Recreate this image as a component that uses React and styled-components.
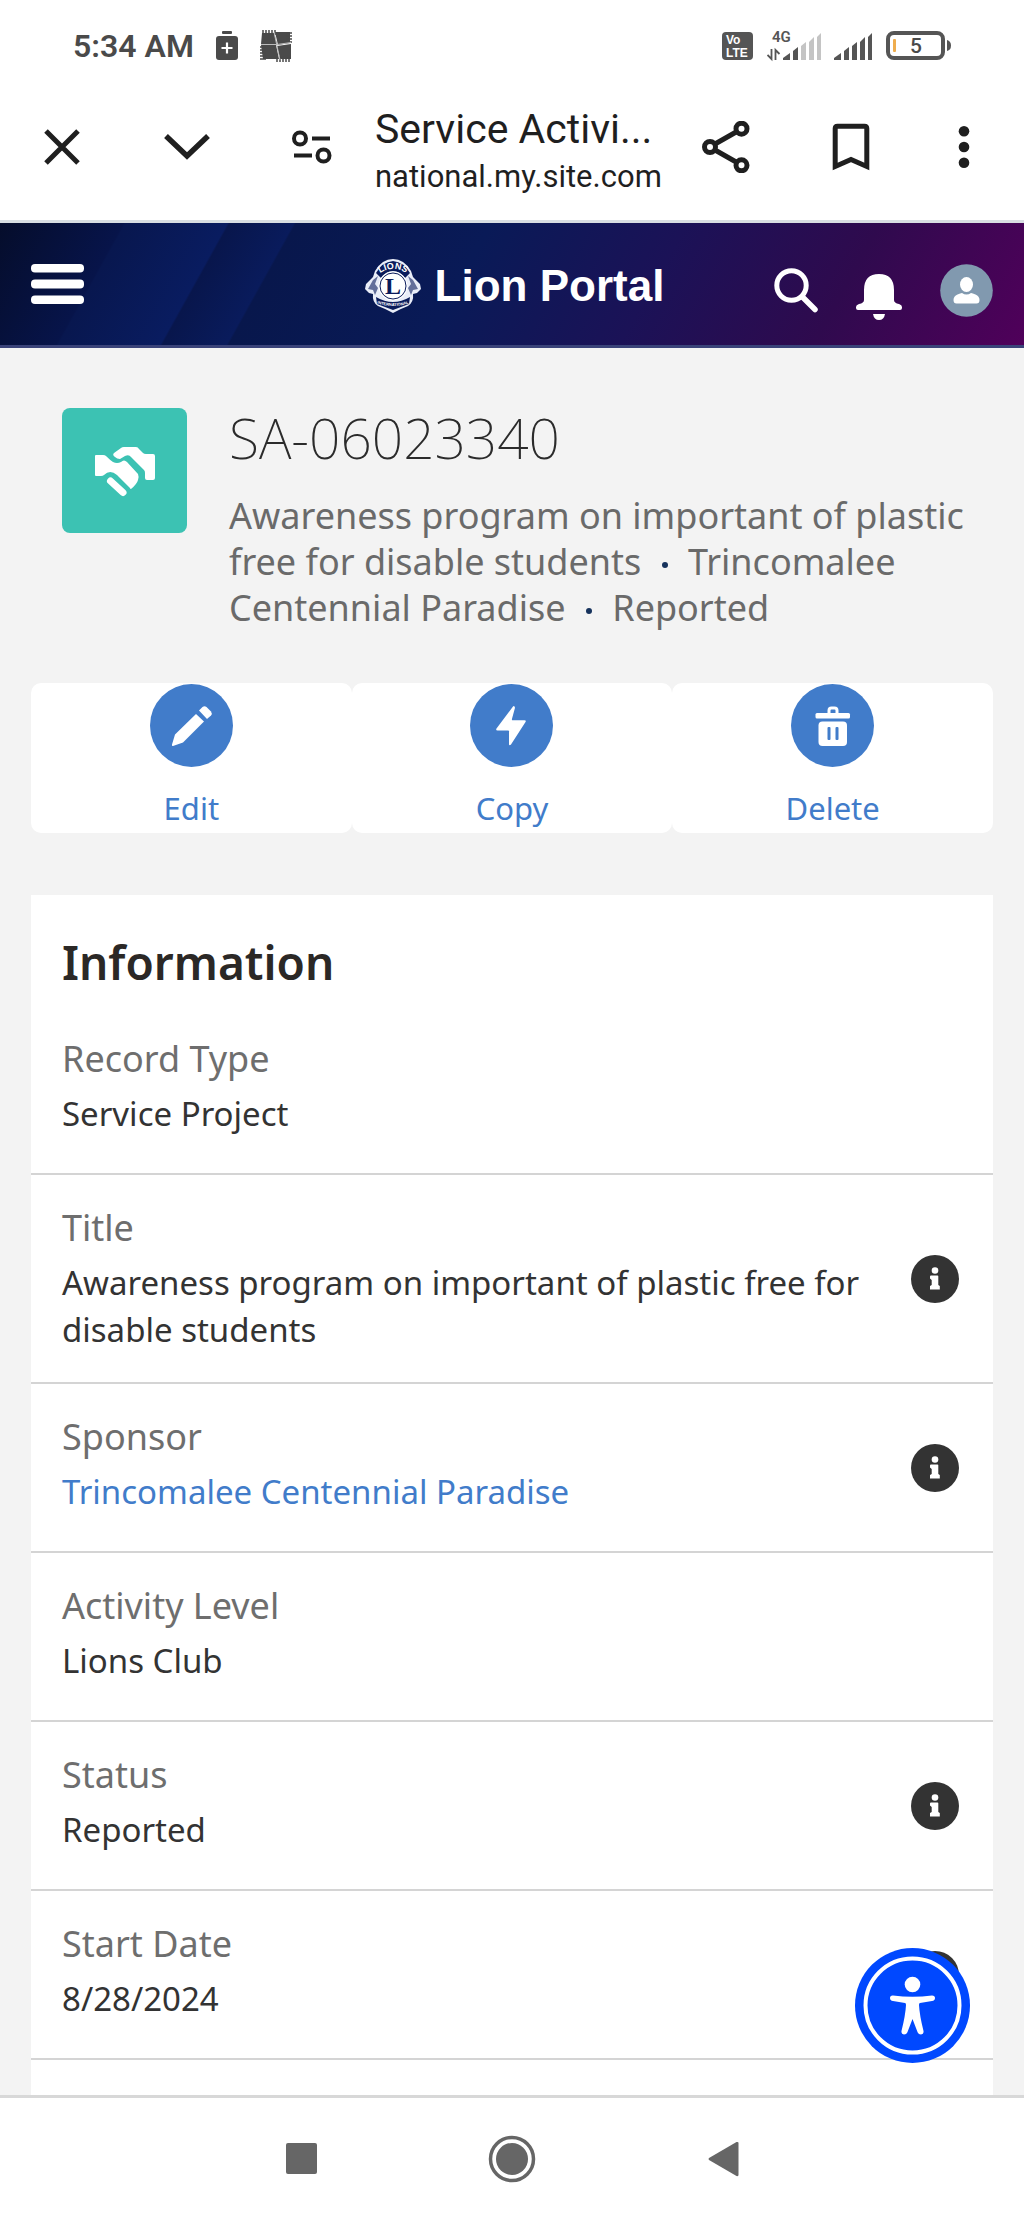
import React from 'react';
import styled, { createGlobalStyle, css } from 'styled-components'

const sans = '"Noto Sans", "Open Sans", sans-serif';

const GlobalStyle = createGlobalStyle`
  * {
    box-sizing: border-box;
  }
  body {
    margin: 0;
    background: #ffffff;
    font-family: ${sans};
  }
  svg {
    display: block;
    flex: none;
  }
`
const Screen = styled.div`
  min-height: 100vh;
  display: flex;
  flex-direction: column;
`
const resetButton = css`
  border: 0;
  padding: 0;
  background: none;
  font: inherit;
  color: inherit;
  cursor: pointer;
`

/* Status bar */
const StatusBar = styled.div`
  display: flex;
  justify-content: space-between;
  align-items: center;
  height: 74px;
  padding: 18px 73px 0;
`
const StatusGroup = styled.div`
  display: flex;
  align-items: center;
  gap: ${props => props.gap}px;
  color: #4a4a4a;
`
const Time = styled.span`
  font-family: Roboto, sans-serif;
  font-size: 32px;
  font-weight: 600;
`

/* Browser toolbar */
const Toolbar = styled.div`
  display: flex;
  align-items: center;
  height: 149px;
  padding: 0 36px 0 26px;
  gap: 27px;
  color: #1f1f1f;
  border-bottom: 3px solid #d8dee2;
`
const ToolGroup = styled.div`
  display: flex;
  gap: 53px;
`
const ToolButton = styled.button`
  ${resetButton}
  display: flex;
  align-items: center;
  justify-content: center;
  width: ${props => props.narrow ? "48px" : "72px"};
  height: 72px;
`
const PageInfo = styled.div`
  flex: 1;
  min-width: 0;
  padding-top: 12px;
  font-family: Roboto, sans-serif;
  white-space: nowrap;
`
const PageTitle = styled.div`
  font-size: 41px;
  line-height: 48px;
`
const PageUrl = styled.div`
  font-size: 31px;
  line-height: 48px;
`

/* Portal header */
const PortalHeader = styled.header`
  display: grid;
  grid-template-columns: 1fr auto 1fr;
  align-items: center;
  height: 125px;
  padding: 0 31px;
  color: #ffffff;
  border-bottom: 3px solid #3a4379;
  background: linear-gradient(
    119deg,
    #050d2b 0,
    #07144a 108px,
    #08174f 110px,
    #091c60 199px,
    #08164c 201px,
    #091b5c 257px,
    #08174c 259px,
    #091a57 430px,
    #1b1257 600px,
    #2f0a4e 770px,
    #50005a 956px
  ) border-box;
`
const MenuButton = styled.button`
  ${resetButton}
  justify-self: start;
`
const Brand = styled.a`
  display: flex;
  align-items: center;
  gap: 13px;
  padding: 4px 0 0 4px;
  color: inherit;
  text-decoration: none;
  font-family: "Liberation Sans", Arial, sans-serif;
  font-size: 44px;
  font-weight: 700;
  line-height: 56px;
`
const HeaderTools = styled.div`
  justify-self: end;
  display: flex;
  align-items: center;
  gap: 38px;
  padding-top: 12px;
`
const HeaderButton = styled.button`
  ${resetButton}
`

/* Record */
const Content = styled.main`
  position: relative;
  flex: 1;
  display: flex;
  flex-direction: column;
  padding: 0 31px;
  background: #f3f3f3;
`
const RecordHeader = styled.div`
  display: flex;
  align-items: flex-start;
  gap: 42px;
  padding: 60px 20px 52px 31px;
`
const RecordIcon = styled.div`
  flex: none;
  width: 125px;
  height: 125px;
  border-radius: 8px;
  background: #3cc2b3;
`
const RecordTitle = styled.h1`
  margin: 0 0 25px;
  font-size: 55px;
  font-weight: 200;
  line-height: 60px;
  color: #2b2b2b;
`
const RecordSummary = styled.p`
  margin: 0;
  font-size: 36px;
  line-height: 46px;
  color: #6a6a6a;
`
const Dot = styled.span`
  display: inline-block;
  width: 6px;
  height: 6px;
  margin: 0 11px;
  border-radius: 50%;
  vertical-align: middle;
  background: #16325c;
`
const Actions = styled.div`
  display: grid;
  grid-template-columns: repeat(3, 1fr);
  margin-bottom: 62px;
`
const Action = styled.button`
  ${resetButton}
  display: flex;
  flex-direction: column;
  align-items: center;
  gap: 18px;
  padding: 1px 0 2px;
  border-radius: 10px;
  background: #ffffff;
  color: #417cca;
  font-size: 31px;
  line-height: 46px;
`

/* Detail card */
const Card = styled.section`
  flex: 1;
  background: #ffffff;
`
const CardTitle = styled.h2`
  margin: 0;
  padding: 37px 31px 14px;
  font-size: 46px;
  font-weight: 600;
  line-height: 60px;
  color: #2b2826;
`
const Row = styled.div`
  display: flex;
  align-items: center;
  justify-content: space-between;
  gap: 40px;
  padding: 30px 34px 29px 31px;
  border-bottom: 2px solid #d4d4d4;
`
const Label = styled.div`
  margin-bottom: 8px;
  font-size: 36px;
  line-height: 46px;
  color: #6e6e6e;
`
const Value = styled.div`
  min-height: 54px;
  font-size: 33px;
  line-height: 47px;
  color: #333333;
`
const ValueLink = styled.a`
  color: #417cca;
  text-decoration: none;
`
const InfoButton = styled.button`
  ${resetButton}
  flex: none;
`
const AccessibilityButton = styled.button`
  ${resetButton}
  position: absolute;
  right: 54px;
  bottom: 32px;
`

const SystemNav = styled.nav`
  display: flex;
  align-items: center;
  justify-content: center;
  gap: 139px;
  height: 124px;
  border-top: 3px solid #d8d8d8;
  color: #666666;
`

/* Drawings */
const SaverIcon = () => (
  <svg width="24" height="30" viewBox="0 0 24 30">
    <rect x="7" y="0" width="10" height="3" rx="1" fill="currentColor"/>
    <rect x="1" y="5" width="22" height="24" rx="3" fill="currentColor"/>
    <path d="M12 11.500v11M6.500 17h11" stroke="#fff" strokeWidth="2.200"/>
  </svg>
)

const KnotIcon = () => (
  <svg width="32" height="34" viewBox="0 0 32 34">
    <path d="M2 4h12l3 11H1zM15 3h15v11l-12 2zM1 16h15l3 14H3zM17 17l14-2v15H20z" fill="currentColor"/>
    <path d="M3 1v5M6 1v5M9 1v5M12 1v5M15 1v5M26 4h6M26 7h6M26 10h6M26 13h6M0 18h6M0 21h6M0 24h6M0 27h6M0 30h6M17 27v6M20 27v6M23 27v6M26 27v6M29 27v6" stroke="currentColor" strokeWidth="1.500"/>
    <path d="M14 3l6 28M1 15.500h16l14-2" stroke="#bbb" strokeWidth="1" fill="none"/>
  </svg>
)

const VolteIcon = () => (
  <svg width="32" height="28" viewBox="0 0 32 28">
    <rect width="31" height="28" rx="4" fill="#555"/>
    <g fill="#fff" fontFamily="Liberation Sans, sans-serif" fontWeight="700" fontSize="12">
      <text x="4" y="12">Vo</text>
      <text x="4" y="25">LTE</text>
    </g>
  </svg>
)

const bars = [
  'M0 28v-2l7-5v7z',
  'M10 28v-9l5-4v13z',
  'M18 28v-14l5-4v18z',
  'M26 28v-18l5-5v23z',
  'M34 28v-23l4-4v27z',
]
const Signal = ({ level }) => (
  <>
    {bars.map((d, i) => <path key={d} d={d} fill={i < level ? '#555' : '#c4c4c4'}/>)}
  </>
)

const MobileDataIcon = () => (
  <svg width="54" height="40" viewBox="0 -4 54 40">
    <g transform="translate(16 2)"><Signal level={2}/></g>
    <text x="5" y="12" fontSize="15" fontWeight="600" fontFamily="Roboto, sans-serif" fill="#555">4G</text>
    <path d="M4.500 19v10l-4-4M8.500 30V20l4 4" stroke="#555" strokeWidth="1.800" fill="none"/>
  </svg>
)

const SignalIcon = () => (
  <svg width="39" height="32" viewBox="0 0 39 32">
    <g transform="translate(0 2)"><Signal level={5}/></g>
  </svg>
)

const BatteryIcon = () => (
  <svg width="65" height="30" viewBox="0 0 65 30">
    <rect x="2" y="2" width="55" height="25" rx="6" fill="none" stroke="#555" strokeWidth="4"/>
    <rect x="7" y="8" width="3" height="13" rx="1" fill="#efad4e"/>
    <path d="M61 9q4 1 4 5.500t-4 5.500z" fill="#555"/>
    <text x="30" y="22" textAnchor="middle" fontSize="21" fontWeight="500" fontFamily="Roboto, sans-serif" fill="#4a4a4a">5</text>
  </svg>
)

const CloseIcon = () => (
  <svg width="36" height="36" viewBox="0 0 36 36">
    <path d="M2 2l32 32M34 2L2 34" stroke="currentColor" strokeWidth="5"/>
  </svg>
)

const ChevronIcon = () => (
  <svg width="46" height="28" viewBox="0 0 46 28">
    <path d="M2 3l21 20L44 3" fill="none" stroke="currentColor" strokeWidth="5.500"/>
  </svg>
)

const TuneIcon = () => (
  <svg width="40" height="34" viewBox="0 0 40 34" fill="none" stroke="currentColor" strokeWidth="4">
    <circle cx="8" cy="8.500" r="6"/>
    <circle cx="31.500" cy="25.500" r="6"/>
    <path d="M20 8.500h18M2 25.500h18"/>
  </svg>
)

const ShareIcon = () => (
  <svg width="48" height="52" viewBox="0 0 48 52" fill="none" stroke="currentColor" strokeWidth="5">
    <circle cx="8" cy="26" r="5.500"/>
    <circle cx="39.500" cy="7.700" r="5.500"/>
    <circle cx="39.500" cy="44.300" r="5.500"/>
    <path d="M13 23L35 10.500M13 29l22 12.500"/>
  </svg>
)

const BookmarkIcon = () => (
  <svg width="38" height="48" viewBox="0 0 38 48">
    <path d="M3.200 43.500V5.500q0-2.300 2.300-2.300h27q2.300 0 2.300 2.300v38L19 36.500z" fill="none" stroke="currentColor" strokeWidth="5"/>
  </svg>
)

const MoreIcon = () => (
  <svg width="12" height="42" viewBox="0 0 12 42" fill="currentColor">
    <circle cx="6" cy="5.300" r="5.300"/>
    <circle cx="6" cy="21" r="5.300"/>
    <circle cx="6" cy="36.700" r="5.300"/>
  </svg>
)

const MenuIcon = () => (
  <svg width="53" height="40" viewBox="0 0 53 40" fill="#fff">
    <rect width="53" height="8.500" rx="4"/>
    <rect y="15.500" width="53" height="9" rx="4"/>
    <rect y="31.500" width="53" height="8.500" rx="4"/>
  </svg>
)

const LionsLogo = () => (
  <svg width="58" height="56" viewBox="0 0 58 56">
    <path d="M11 13Q18 1 29 1t18 12l2 6 7 7 1 5-4 4-4 1q1 8-5 12-8 3-15 7-7-4-15-7-6-4-5-12l-4-1-4-4 1-5 7-7z" fill="#e9edf8"/>
    <path d="M12 15Q18 4 29 3q11 1 17 12l-5 5Q36 13 29 13t-12 7z" fill="#0a1b5b"/>
    <path d="M9 22l5-4-3 8 3 4-3 7-2-5-5-1zM49 22l-5-4 3 8-3 4 3 7 2-5 5-1z" fill="#0a1b5b" opacity="0.600"/>
    <path d="M12 39q17 10 34 0l-1 7q-8 3-16 6-8-3-16-6z" fill="#0a1b5b"/>
    <circle cx="29" cy="28" r="14.500" fill="#fff"/>
    <circle cx="29" cy="28" r="13" fill="none" stroke="#0a1b5b" strokeWidth="1"/>
    <path id="lions-arc" d="M13 18Q19 11 29 11T45 18" fill="none"/>
    <path id="intl-arc" d="M9 44q20 8 40 0" fill="none"/>
    <g fill="#fff" textAnchor="middle" fontFamily="Liberation Sans, sans-serif" fontWeight="700">
      <text fontSize="9"><textPath href="#lions-arc" startOffset="50%">LIONS</textPath></text>
      <text fontSize="4"><textPath href="#intl-arc" startOffset="50%">INTERNATIONAL</textPath></text>
    </g>
    <text x="29" y="36" textAnchor="middle" fontSize="24" fontWeight="700" fontFamily="Liberation Serif, serif" fill="#0a1b5b">L</text>
  </svg>
)

const SearchIcon = () => (
  <svg width="44" height="46" viewBox="0 0 44 46" fill="none" stroke="#fff">
    <circle cx="17.500" cy="18.500" r="14.700" strokeWidth="5"/>
    <path d="M28.500 30L41 42.500" strokeWidth="5.500" strokeLinecap="round"/>
  </svg>
)

const BellIcon = () => (
  <svg width="46" height="62" viewBox="0 0 46 62" fill="#fff">
    <path d="M8 31Q8 15 23 15t15 16v10q0 3 5 4 3 1 3 3v1q0 2-2 2H2q-2 0-2-2v-1q0-2 3-3 5-1 5-4z"/>
    <path d="M17 55h12q-1 6-6 6t-6-6z"/>
  </svg>
)

const AvatarIcon = () => (
  <svg width="53" height="53" viewBox="0 0 53 53">
    <circle cx="26.500" cy="26.500" r="26.300" fill="#8199af"/>
    <ellipse cx="26.500" cy="20.500" rx="6.500" ry="7.500" fill="#fff"/>
    <path d="M13.500 36q0-4 4-5.500 3-1.500 4.500-1.500 4.500 3 9 0 1.500 0 4.500 1.500 4 1.500 4 5.500 0 3.500-3 3.500h-20q-3 0-3-3.500z" fill="#fff"/>
  </svg>
)

const HandshakeIcon = () => (
  <svg width="125" height="125" viewBox="0 0 125 125" fill="#fff">
    <path d="M52 45l7-5q1-1 3-1h12q2 0 3 2l4 4q1 1 3 1h7q2 0 2 2v22q0 2-2 2h-6q-2 0-2-2v-5q0-2-1-3L69 49q-2-3-6-1l-5 3q-3 0-5-2-3-2-1-4z"/>
    <path d="M34 47h7q2 0 3 1 4 4 7 6 4 2 8 0 3-3 6 0l11 12q1 2 0 6-1 4-7 9-1 0-1-1l-13-13q-7-6-13 0-1 1-3 1h-5q-1 0-1-1V48q0-1 1-1z"/>
    <path d="M48.500 73L61 84.500" stroke="#fff" strokeWidth="7" strokeLinecap="round"/>
  </svg>
)

const EditIcon = () => (
  <svg width="83" height="83" viewBox="0 0 83 83" fill="#fff">
    <circle cx="41.500" cy="41.500" r="41.500" fill="#417cca"/>
    <path d="M46 30l8 7.500L33 58.500 23 62q-1.500 0-1-1.500L25 50.500z"/>
    <path d="M49 26.500l3.500-3.500q2-1.500 4 0l4.500 4.500q1.500 2 0 4L57 35z"/>
  </svg>
)

const CopyIcon = () => (
  <svg width="83" height="83" viewBox="0 0 83 83" fill="#fff">
    <circle cx="41.500" cy="41.500" r="41.500" fill="#417cca"/>
    <path d="M43 22.500L26.500 44.500q-1 2 1 2h10.500q1.500 0 1 1.500L39 60.500q.5 1.500 2 0L55.500 38q1-1.700-1-1.700H43q-1.500 0-1-1.500l3-11q-.5-2.500-2-1.300z"/>
  </svg>
)

const DeleteIcon = () => (
  <svg width="83" height="83" viewBox="0 0 83 83" fill="#fff">
    <circle cx="41.500" cy="41.500" r="41.500" fill="#417cca"/>
    <rect x="24.500" y="29" width="34.500" height="5.500" rx="1.500"/>
    <path d="M38 30v-3.500q0-2.500 2.500-2.500h3q2.500 0 2.500 2.500V30" fill="none" stroke="#fff" strokeWidth="3"/>
    <rect x="27.500" y="37.500" width="28.500" height="24.500" rx="4"/>
    <rect x="36.500" y="43" width="3" height="13" rx="1" fill="#417cca"/>
    <rect x="44.500" y="43" width="3" height="13" rx="1" fill="#417cca"/>
  </svg>
)

const InfoIcon = () => (
  <svg width="48" height="48" viewBox="0 0 48 48" fill="#fff">
    <circle cx="24" cy="24" r="24" fill="#333"/>
    <circle cx="24" cy="15.500" r="3.300"/>
    <path d="M20 20.500h6.500q.8 0 .8.800V30l1.500 1v3.500H19V31l1.700-1v-5L19 23.500v-2q0-1 1-1z"/>
  </svg>
)

const AccessibilityIcon = () => (
  <svg width="115" height="115" viewBox="0 0 115 115" fill="#fff">
    <circle cx="57.500" cy="57.500" r="57.500" fill="#0048ff"/>
    <circle cx="57.500" cy="57.500" r="47" fill="none" stroke="#fff" strokeWidth="4"/>
    <circle cx="57.500" cy="36.500" r="7.800"/>
    <path d="M38 47.500q19.500 2.500 39 0 3 0 3 2.500 0 2.700-3 3l-12 2q-1 0-1 2 .5 10 4.500 26 .5 3-2.500 3.500-2.500 0-3.500-2.500l-5-13-5 13q-1 2.500-3.500 2.500-3-.5-2.500-3.500 4-16 4.500-26 0-2-1-2l-12-2q-3-.3-3-3t3-2.500z"/>
  </svg>
)

const SquareIcon = () => (
  <svg width="31" height="31"><rect width="31" height="31" rx="2" fill="currentColor"/></svg>
)

const HomeIcon = () => (
  <svg width="48" height="48" viewBox="0 0 48 48">
    <circle cx="24" cy="24" r="21.500" fill="none" stroke="currentColor" strokeWidth="3.500"/>
    <circle cx="24" cy="24" r="16" fill="currentColor"/>
  </svg>
)

const BackIcon = () => (
  <svg width="31" height="36" viewBox="0 0 31 36">
    <path d="M1 17L28.500 1q2-.5 2 1v32q0 1.500-2 1L1 19q-1-1 0-2z" fill="currentColor"/>
  </svg>
)

const fields = [
  { label: 'Record Type', value: 'Service Project' },
  { label: 'Title', value: 'Awareness program on important of plastic free for disable students', info: true },
  { label: 'Sponsor', value: 'Trincomalee Centennial Paradise', link: true, info: true },
  { label: 'Activity Level', value: 'Lions Club' },
  { label: 'Status', value: 'Reported', info: true },
  { label: 'Start Date', value: '8/28/2024', info: true },
]

const Field = ({ label, value, link, info }) => (
  <Row>
    <div>
      <Label>{label}</Label>
      <Value>{link ? <ValueLink href="#sponsor">{value}</ValueLink> : value}</Value>
    </div>
    {info ? <InfoButton aria-label={`Help for ${label}`}><InfoIcon/></InfoButton> : null}
  </Row>
)

export default function App() {
  return (
    <Screen>
      <GlobalStyle/>
      <StatusBar>
        <StatusGroup gap={21}>
          <Time>5:34 AM</Time>
          <SaverIcon/>
          <KnotIcon/>
        </StatusGroup>
        <StatusGroup gap={13}>
          <VolteIcon/>
          <MobileDataIcon/>
          <SignalIcon/>
          <BatteryIcon/>
        </StatusGroup>
      </StatusBar>
      <Toolbar>
        <ToolGroup>
          <ToolButton aria-label="Close"><CloseIcon/></ToolButton>
          <ToolButton aria-label="Minimize"><ChevronIcon/></ToolButton>
          <ToolButton aria-label="Site settings"><TuneIcon/></ToolButton>
        </ToolGroup>
        <PageInfo>
          <PageTitle>Service Activi...</PageTitle>
          <PageUrl>national.my.site.com</PageUrl>
        </PageInfo>
        <ToolGroup>
          <ToolButton aria-label="Share"><ShareIcon/></ToolButton>
          <ToolButton aria-label="Bookmark"><BookmarkIcon/></ToolButton>
          <ToolButton narrow aria-label="More"><MoreIcon/></ToolButton>
        </ToolGroup>
      </Toolbar>
      <PortalHeader>
        <MenuButton aria-label="Menu"><MenuIcon/></MenuButton>
        <Brand href="#home"><LionsLogo/>Lion Portal</Brand>
        <HeaderTools>
          <HeaderButton aria-label="Search"><SearchIcon/></HeaderButton>
          <HeaderButton aria-label="Notifications"><BellIcon/></HeaderButton>
          <HeaderButton aria-label="Profile"><AvatarIcon/></HeaderButton>
        </HeaderTools>
      </PortalHeader>
      <Content>
        <RecordHeader>
          <RecordIcon><HandshakeIcon/></RecordIcon>
          <div>
            <RecordTitle>SA-06023340</RecordTitle>
            <RecordSummary>
              Awareness program on important of plastic free for disable students <Dot/> Trincomalee
              Centennial Paradise <Dot/> Reported
            </RecordSummary>
          </div>
        </RecordHeader>
        <Actions>
          <Action><EditIcon/>Edit</Action>
          <Action><CopyIcon/>Copy</Action>
          <Action><DeleteIcon/>Delete</Action>
        </Actions>
        <Card>
          <CardTitle>Information</CardTitle>
          {fields.map(field => <Field key={field.label} {...field}/>)}
        </Card>
        <AccessibilityButton aria-label="Accessibility options"><AccessibilityIcon/></AccessibilityButton>
      </Content>
      <SystemNav>
        <ToolButton aria-label="Recent apps"><SquareIcon/></ToolButton>
        <ToolButton aria-label="Home"><HomeIcon/></ToolButton>
        <ToolButton aria-label="Back"><BackIcon/></ToolButton>
      </SystemNav>
    </Screen>
  );
}
